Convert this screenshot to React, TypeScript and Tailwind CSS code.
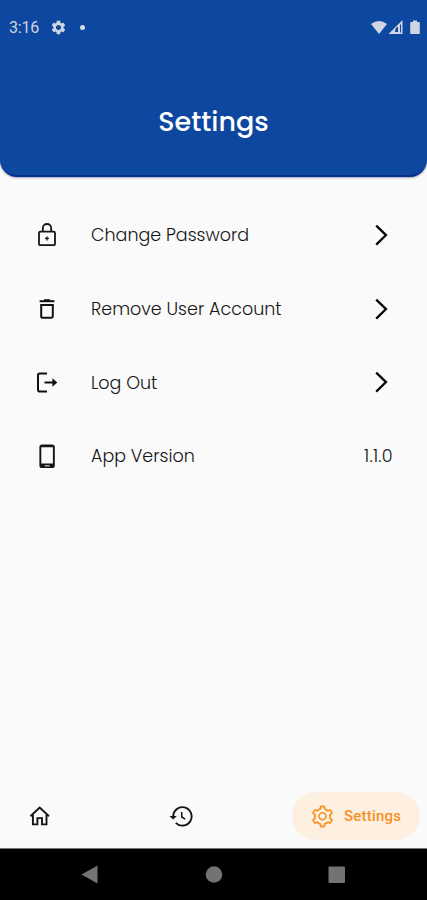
import type { ReactNode } from 'react';
import { AiOutlineSetting } from 'react-icons/ai';
import { MdSettings } from 'react-icons/md';

function LockIcon() {
  return (
    <svg width="24" height="24" viewBox="0 0 24 24" fill="none" stroke="#151515" strokeWidth="1.8">
      <rect x="4" y="8.6" width="16" height="13.6" rx="1.3" />
      <path d="M7.8 8.4V5.2a4.2 4.2 0 0 1 8.4 0v3.2" />
      <path d="M12 13.4v4M10 15.4h4" strokeWidth="1.3" />
    </svg>
  );
}

function TrashIcon() {
  return (
    <svg width="24" height="24" viewBox="0 0 24 24" fill="none" stroke="#111" strokeWidth="2">
      <path d="M6.2 8h11.6v11.2a1.6 1.6 0 0 1-1.6 1.6H7.8a1.6 1.6 0 0 1-1.6-1.6z" />
      <path d="M4.6 4.2h14.8" />
      <path d="M9 3.2h6" />
    </svg>
  );
}

function LogOutIcon() {
  return (
    <svg width="24" height="24" viewBox="0 0 24 24" fill="none" stroke="#111" strokeWidth="2">
      <path d="M12 3.500H4.800A1.800 1.800 0 0 0 3 5.300v14.400A1.800 1.800 0 0 0 4.800 21.500H12" />
      <path d="M9.500 12.500H19" />
      <path d="M17.400 8.300L22.300 12.500l-4.900 4.200z" fill="#111" stroke="none" />
    </svg>
  );
}

function PhoneIcon() {
  return (
    <svg width="24" height="24" viewBox="0 0 24 24">
      <path fillRule="evenodd" fill="#151515" d="M7 .4h10.200a2.600 2.600 0 0 1 2.600 2.600v18.400a2.600 2.600 0 0 1-2.600 2.600H7a2.600 2.600 0 0 1-2.600-2.600V3A2.600 2.600 0 0 1 7 .4zM6.300 3.300v16.300h11.600V3.300z" />
      <path d="M9.800 21.800h4.800" stroke="#bbb" strokeWidth="1.400" />
    </svg>
  );
}

function HomeIcon() {
  return (
    <svg width="24" height="24" viewBox="0 0 24 24" fill="none" stroke="#151515" strokeWidth="1.900">
      <path d="M2.400 12.200L11.700 3.500l9.300 8.700" />
      <path d="M4.900 10.800v9.600h4.500v-6.300h4.600v6.300h4.500v-9.600" />
    </svg>
  );
}

function HistoryIcon() {
  return (
    <svg width="24" height="24" viewBox="0 0 24 24" fill="none" stroke="#151515" strokeWidth="1.900">
      <path d="M4.200 12.800a9.200 9.200 0 1 1 2.600 6" />
      <path d="M.4 12h7.400l-3.700 3.400z" fill="#151515" stroke="none" />
      <path d="M12.700 8v5l3.500 2.200" strokeWidth="1.500" />
    </svg>
  );
}

function Chevron() {
  return (
    <svg width="16" height="24" viewBox="0 0 16 24" fill="none" stroke="#080808" strokeWidth="2.300">
      <path d="M2.200 2.600L12 12.100 2.200 21.600" />
    </svg>
  );
}

function Row({ icon, label, trailing }: { icon: ReactNode; label: string; trailing: ReactNode }) {
  return (
    <li className="flex h-[73.700px] items-center pl-[35px] pr-[34px]">
      {icon}
      <span className="ml-8 whitespace-nowrap pt-px text-[17.500px] font-light text-[#151515]">{label}</span>
      <span className="ml-auto flex items-center">{trailing}</span>
    </li>
  );
}

export default function App() {
  const chevron = <span className="mr-[3px]"><Chevron /></span>;
  return (
    <div className="flex h-[900px] w-[427px] flex-col overflow-hidden bg-[#fafafa] font-['Poppins','Inter',sans-serif]">
      <header className="h-[177px] shrink-0 rounded-b-[17px] border-b-2 border-[#06308f] bg-[#0d479f] shadow-[0_1px_2px_rgba(0,0,50,0.35)]">
        <div className="flex h-[55px] items-center pl-[9px] pr-[7px] font-['Roboto',sans-serif] text-[#cfd5e2]">
          <span className="w-[31px] pt-px text-[16px] tracking-[-0.200px]">3:16</span>
          <MdSettings className="ml-[10px]" size={17} />
          <span className="ml-[13px] h-[5px] w-[5px] rounded-full bg-[#d8deea]" />
          <svg className="ml-auto" width="49" height="16" viewBox="0 0 49 16" fill="currentColor">
            <path d="M0 4Q8 -2 16 4L8 14z" />
            <path fillRule="evenodd" d="M17.500 14L31.500 0v14zM24 12h3V6.800q-3 1.400-3 5.200zM29 5v7.500h1V4z" />
            <path d="M40 2h2V.5h4V2h2q.8 0 .8.800v10.400q0 .8-.8.800h-8q-.8 0-.8-.8V2.800q0-.8.8-.8z" />
          </svg>
        </div>
        <h1 className="mt-[47px] text-center text-[27px] font-medium leading-[40px] text-white">Settings</h1>
      </header>
      <main className="flex-1 pt-[21px]">
        <ul>
          <Row icon={<LockIcon />} label="Change Password" trailing={chevron} />
          <Row icon={<TrashIcon />} label="Remove User Account" trailing={chevron} />
          <Row icon={<LogOutIcon />} label="Log Out" trailing={chevron} />
          <Row icon={<PhoneIcon />} label="App Version" trailing={<span className="pt-px text-[17.600px] font-light text-[#151515] tracking-[0.300px]">1.1.0</span>} />
        </ul>
      </main>
      <nav className="flex h-[56px] shrink-0 items-start justify-between pl-[28px] pr-[7px]">
        <span className="flex h-12 items-center"><HomeIcon /></span>
        <span className="ml-[18px] flex h-12 items-center"><HistoryIcon /></span>
        <span className="flex h-12 w-[128px] items-center rounded-full bg-[#fef0e1] pl-[18px] text-[#f99024]">
          <AiOutlineSetting size={25} />
          <span className="ml-[9px] font-['Roboto',sans-serif] text-[15px] font-medium tracking-[0.200px]">Settings</span>
        </span>
      </nav>
      <footer className="h-[52px] shrink-0 border-t border-[#777] bg-black">
        <svg width="427" height="51" viewBox="0 0 427 51" fill="#737373">
          <path d="M81.500 25.500L97.500 16.500v18z" />
          <circle cx="214" cy="25.500" r="8.300" />
          <rect x="328.500" y="17.500" width="16.500" height="16.500" rx="1" />
        </svg>
      </footer>
    </div>
  );
}
